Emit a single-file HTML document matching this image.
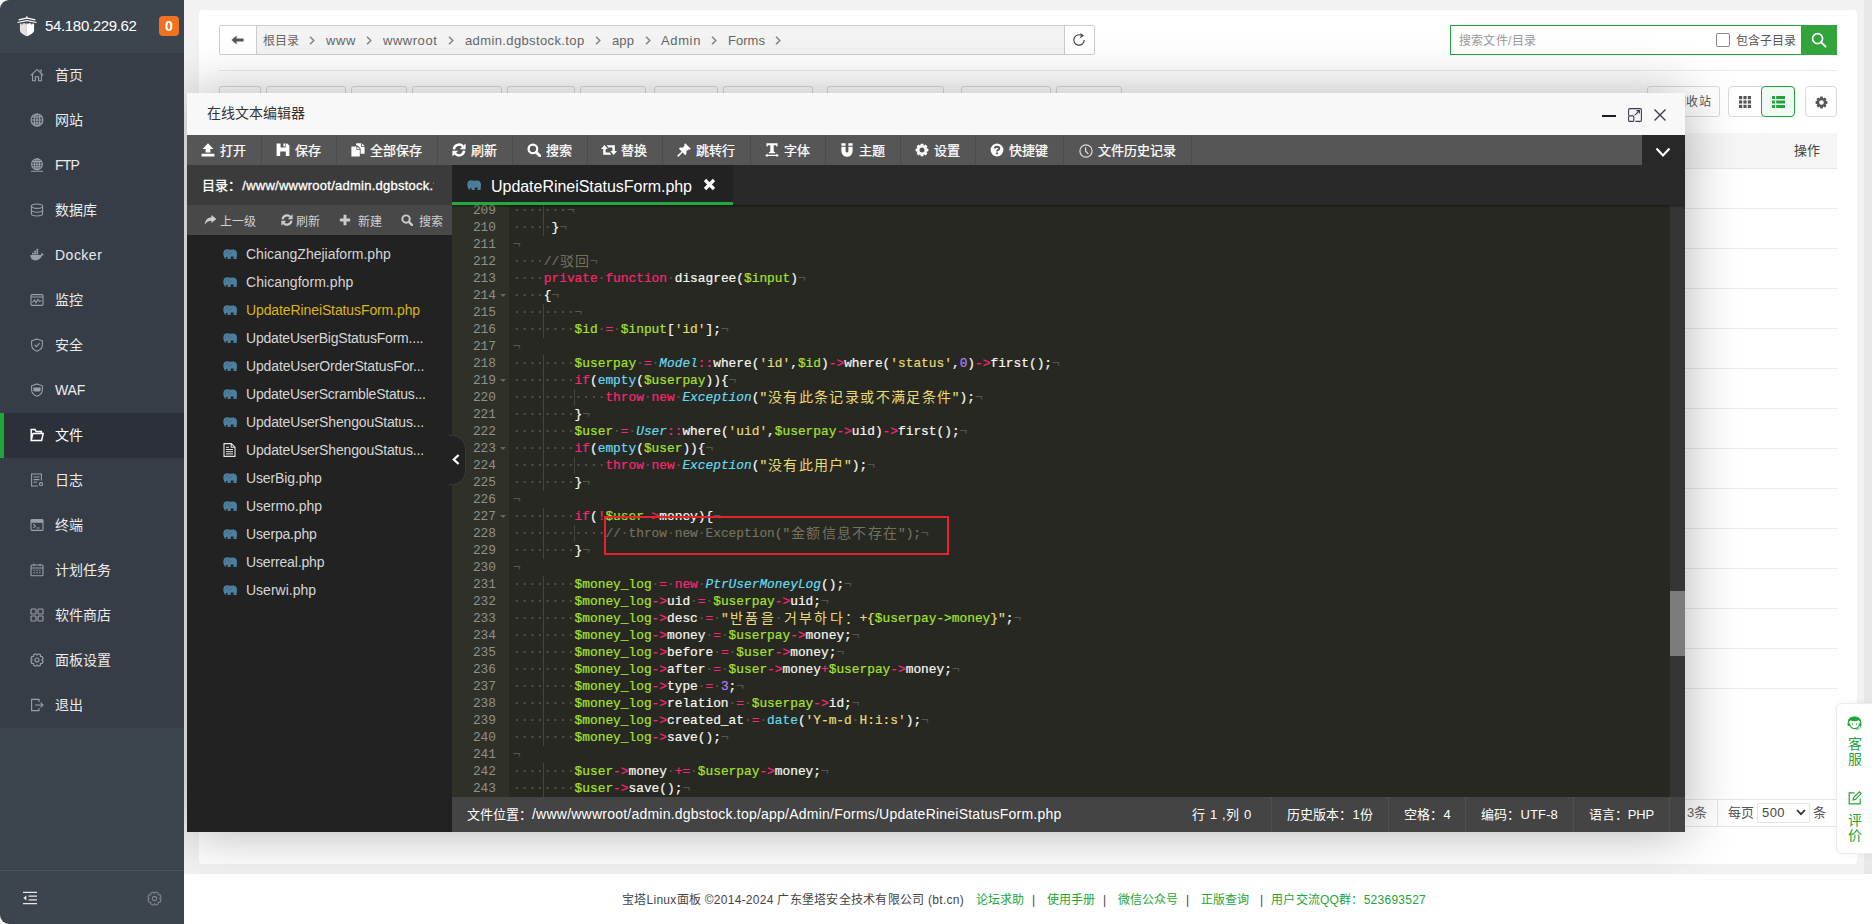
<!DOCTYPE html>
<html lang="zh-CN"><head><meta charset="utf-8"><title>BT</title><style>
*{box-sizing:border-box;margin:0;padding:0}
html,body{width:1872px;height:924px;overflow:hidden}
body{background:#f2f2f2;font-family:"Liberation Sans",sans-serif;font-size:12px;color:#666;position:relative}
.abs{position:absolute}
svg{display:block}
/* sidebar */
#cornerbg{position:absolute;left:0;top:0;width:12px;height:924px;background:#fff}
#side{position:absolute;left:0;top:0;width:184px;height:924px;background:#3c444d;border-radius:9px 0 0 9px;overflow:hidden}
#side .menu{position:absolute;left:0;top:53px;width:184px;height:675px;background:#363d47}
#side .it{position:absolute;left:0;width:184px;height:45px;color:#ebebeb;font-size:14px;line-height:45px}
#side .it span{position:absolute;left:55px;top:0;white-space:nowrap}
#side .it svg{position:absolute;left:29px;top:14px}
#side .it.on{background:#2c3038;color:#fff}
#side .it.on:before{content:"";position:absolute;left:0;top:0;width:4px;height:45px;background:#20a53a}
#ip{position:absolute;left:45px;top:16px;color:#fff;font-size:15px;line-height:20px;letter-spacing:-0.33px;white-space:nowrap}
#clip{position:absolute;left:184px;top:0;width:1688px;height:874px;overflow:hidden}
#clip>#shift{position:absolute;left:-184px;top:0;width:1872px;height:924px}
#badge{position:absolute;left:159px;top:16px;width:20px;height:20px;border-radius:4px;background:#f0721e;color:#fff;font-weight:bold;font-size:14px;line-height:20px;text-align:center}
#sline{position:absolute;left:0;top:870px;width:184px;height:1px;background:#48505a}
/* main */
#card{position:absolute;left:199px;top:10px;width:1658px;height:854px;background:#fff;border-radius:4px}
#rstrip{position:absolute;left:1864px;top:0;width:8px;height:874px;background:#e8e8e8}
#footer{position:absolute;left:184px;top:874px;width:1688px;height:50px;background:#fff}

#modal{position:absolute;left:187px;top:93px;width:1498px;height:739px;background:#222;box-shadow:1px 1px 50px rgba(0,0,0,.3)}
#mtitle{position:absolute;left:0;top:0;width:1498px;height:42px;background:#f8f8f8;color:#333;font-size:14px;line-height:40px;padding-left:20px}
#mtool{position:absolute;left:0;top:42px;width:1498px;height:30px;background:#282828}
#mtool .tb{position:absolute;top:0;height:30px;background:#565656;border-right:1px solid #4b4b4b;color:#fff;font-size:13px;line-height:30px;white-space:nowrap}
#mtool .tb span{position:absolute;top:1px;-webkit-text-stroke:0.25px #fff}
#mtool .tb svg{position:absolute}
#mtool .fill{position:absolute;top:0;height:30px;background:#565656}
#lpath{position:absolute;left:0;top:72px;width:265px;height:40px;background:#3b3b3b;color:#fff;font-size:13px;line-height:40px;white-space:nowrap;overflow:hidden}
#lsub{position:absolute;left:0;top:112px;width:265px;height:30px;background:#484848;color:#d0d0d0;font-size:12px;line-height:30px}
#lsub span{position:absolute;top:1.5px;white-space:nowrap}
#llist{position:absolute;left:0;top:142px;width:265px;height:597px;background:#222}
#llist .f{position:absolute;left:59px;height:28px;line-height:28px;font-size:14px;color:#d6d6d6;white-space:nowrap;letter-spacing:0.1px}
#llist .f.on{color:#d9b416}
#tabs{position:absolute;left:265px;top:72px;width:1233px;height:40px;background:#292929}
#tab1{position:absolute;left:0;top:0;width:281px;height:40px;background:#222;border-bottom:3px solid #23a93c;color:#fff;font-size:15px;line-height:40px;white-space:nowrap}
#ed{position:absolute;left:265px;top:112px;width:1233px;height:592px;background:#272822;overflow:hidden}
#gut{position:absolute;left:0;top:0;width:57px;height:592px;background:#2f3129}
#edsh{position:absolute;left:0;top:0;width:1233px;height:3px;background:linear-gradient(rgba(0,0,0,.35),rgba(0,0,0,0))}
#sbar{position:absolute;left:1218px;top:0;width:15px;height:592px;background:#353535}
#sthumb{position:absolute;left:0;top:386px;width:15px;height:65px;background:#7c7c7c}
.ln{position:absolute;left:0;width:57px;height:17px;font:12.83px/17px "Liberation Mono",monospace;color:#8f908a;text-align:right;padding-right:13px}
.fold{position:absolute;left:47.5px;width:0;height:0;border-left:3px solid transparent;border-right:3px solid transparent;border-top:3.5px solid #65665f}
.cl{position:absolute;left:61px;height:17px;font:12.83px/17px "Liberation Mono",monospace;color:#f8f8f2;white-space:pre;letter-spacing:0;-webkit-text-stroke:0.2px currentColor}
.cl span{display:inline-block;height:17px;vertical-align:top}
.k{color:#f92672}.v{color:#a6e22e}.s{color:#e6db74}.n{color:#ae81ff}.f{color:#66d9ef}.c{color:#66d9ef;font-style:italic}.cm{color:#75715e}
.i{color:#56564e}
.g{background:linear-gradient(#44453c,#44453c) no-repeat right top/1px 17px}
.w{width:15.394px;text-align:center;font-family:"Liberation Sans",sans-serif;font-size:14px;overflow:visible;-webkit-text-stroke:0}
#redbox{position:absolute;left:152px;top:311px;width:345px;height:39px;border:2px solid #e8222c}
#stat{position:absolute;left:265px;top:704px;width:1233px;height:35px;background:#444;color:#fff;font-size:13px;line-height:35px}
#stat span{position:absolute;top:0;white-space:nowrap}
.t{position:absolute;white-space:pre;display:block}
#lsub svg,#mtool svg{position:absolute}
#stat i{position:absolute;top:0;width:1px;height:35px;background:#4f4f4f}
#collapse{position:absolute;left:262px;top:342px;width:17px;height:50px;background:#222;border:1px solid #3a3a3a;border-left:none;border-radius:0 14px 14px 0}

.pt{position:absolute;white-space:pre;display:block}
.bx{position:absolute}
#pathbar{position:absolute;left:219px;top:25px;width:876px;height:30px;border:1px solid #ccc;border-radius:2px;background:#f3f3f3}
#pathbar .back{position:absolute;left:0;top:0;width:37px;height:28px;background:#fff;border-right:1px solid #ccc}
#pathbar .ref{position:absolute;right:0;top:0;width:30px;height:28px;background:#fff;border-left:1px solid #ccc}
#search{position:absolute;left:1450px;top:25px;width:387px;height:30px;border:1px solid #20a53a;background:#fff}
#search .btn{position:absolute;right:-1px;top:-1px;width:36px;height:30px;background:#31a53c}
#search .cb{position:absolute;left:265px;top:7px;width:14px;height:14px;border:1px solid #8a8a8a;border-radius:2px;background:#fff}
#hline{position:absolute;left:219px;top:70px;width:1618px;height:1px;background:#eaeaea}
.fb{position:absolute;top:86px;height:31px;border:1px solid #d9d9d9;border-radius:3px;background:#fff}
.fsep{position:absolute;top:94px;width:1px;height:16px;background:#ddd}
#thead{position:absolute;left:219px;top:133px;width:1618px;height:36px;background:#f6f6f6;border-bottom:1px solid #e6e6e6}
.rl{position:absolute;left:219px;width:1618px;height:1px;background:#ebebeb}
#pg{position:absolute;left:219px;top:799px;width:1618px;height:28px;border-top:1px solid #e6e6e6;border-bottom:1px solid #e6e6e6}
#float{position:absolute;left:1836px;top:703px;width:40px;height:151px;background:#fff;border:1px solid #ececec;border-radius:6px;box-shadow:0 0 6px rgba(0,0,0,.06)}
.fl{position:absolute;color:#20a53a;font-size:14px;line-height:15px;width:14px;text-align:center}
#footer .g{color:#20a53a}
</style></head><body><div id="cornerbg"></div><div id="side">
<svg width="20" height="22" viewBox="0 0 20 22" style="position:absolute;left:17px;top:15px"><path fill="#fff" d="M9.9 .6 L10.7 2.5 L18.5 4.3 L18.2 5.5 L9.9 3.7 L1.8 5.5 L1.5 4.3 L9.1 2.5 Z"/><path fill="#fff" d="M9.9 4.9 L19.7 6.9 L19.3 8.1 L9.9 6.2 L.7 8.1 L.3 6.9 Z"/><path fill="#e2e2e2" d="M2.9 8.8 L4.2 8.6 L4.9 10 L5.7 8.4 L8 8 L8.7 9.4 L9.9 7.8 V21.3 C6 19.7 2.9 17.8 2.9 15 Z"/><path fill="#fff" d="M9.9 7.8 L11.1 9.4 L11.8 8 L14.1 8.4 L14.9 10 L15.6 8.6 L17.1 8.8 V15 C17.1 17.8 14 19.7 9.9 21.3 Z"/></svg><div id="ip">54.180.229.62</div><div id="badge">0</div>
<div class="menu">
<div class="it" style="top:0px"><svg width="14" height="14" viewBox="0 0 14 14" style="left:30px;top:14.5px"><path fill="none" stroke="#9aa0a7" stroke-width="1.1" d="M.8 7.4 L7 1.4 L13.2 7.4 M2.6 6 V12.8 H5.4 V8.8 H8.6 V12.8 H11.4 V6 M9.6 2.2 H11.2 V4.2"/></svg><span>首页</span></div>
<div class="it" style="top:45px"><svg width="14" height="14" viewBox="0 0 14 14" style="left:30px;top:14.5px"><circle cx="7" cy="7" r="6" fill="none" stroke="#9aa0a7" stroke-width="1.1"/><ellipse cx="7" cy="7" rx="2.8" ry="6" fill="none" stroke="#9aa0a7" stroke-width="1.1"/><path fill="none" stroke="#9aa0a7" stroke-width="1.1" d="M7 1 V13 M1 7 H13 M1.8 4 H12.2 M1.8 10 H12.2"/></svg><span>网站</span></div>
<div class="it" style="top:90px"><svg width="14" height="14" viewBox="0 0 14 14" style="left:30px;top:14.5px"><circle cx="7" cy="6.2" r="5.4" fill="none" stroke="#9aa0a7" stroke-width="1.1"/><ellipse cx="7" cy="6.2" rx="2.5" ry="5.4" fill="none" stroke="#9aa0a7" stroke-width="1.1"/><path fill="none" stroke="#9aa0a7" stroke-width="1.1" d="M7 .8 V11.6 M1.6 6.2 H12.4 M2.4 3.6 H11.6 M2.4 8.8 H11.6 M1 13.2 H13"/></svg><span style="letter-spacing:-0.818px">FTP</span></div>
<div class="it" style="top:135px"><svg width="14" height="14" viewBox="0 0 14 14" style="left:30px;top:14.5px"><ellipse cx="7" cy="3.2" rx="5.6" ry="2.2" fill="none" stroke="#9aa0a7" stroke-width="1.1"/><path fill="none" stroke="#9aa0a7" stroke-width="1.1" d="M1.4 3.2 V10.8 C1.4 12 3.8 13 7 13 C10.2 13 12.6 12 12.6 10.8 V3.2 M1.4 7 C1.4 8.2 3.8 9.2 7 9.2 C10.2 9.2 12.6 8.2 12.6 7"/></svg><span>数据库</span></div>
<div class="it" style="top:180px"><svg width="14" height="14" viewBox="0 0 14 14" style="left:30px;top:14.5px"><path fill="#9aa0a7" d="M.4 7 H11 C11 5.8 11.4 5.2 12 4.8 C12.4 5.4 12.6 6 12.6 6.4 C13.2 6.2 13.8 6.4 14 6.6 C13.6 7.4 12.8 7.6 12 7.6 C11 10.6 8.6 12.4 5.4 12.4 C2.4 12.4 .4 10.4 .4 7 Z M2 4.8 H3.8 V6.4 H2 Z M4.2 4.8 H6 V6.4 H4.2 Z M6.4 4.8 H8.2 V6.4 H6.4 Z M4.2 2.8 H6 V4.4 H4.2 Z M6.4 2.8 H8.2 V4.4 H6.4 Z M6.4 .8 H8.2 V2.4 H6.4 Z"/></svg><span style="letter-spacing:0.49px">Docker</span></div>
<div class="it" style="top:225px"><svg width="14" height="14" viewBox="0 0 14 14" style="left:30px;top:14.5px"><rect x="1" y="1.6" width="12" height="10.8" rx="1" fill="none" stroke="#9aa0a7" stroke-width="1.1"/><path fill="none" stroke="#9aa0a7" stroke-width="1.1" d="M1 4 H13 M2.4 9.4 L4.6 7 L6 9.8 L8 6.4 L9.6 8.6 L11.6 7.4"/></svg><span>监控</span></div>
<div class="it" style="top:270px"><svg width="14" height="14" viewBox="0 0 14 14" style="left:30px;top:14.5px"><path fill="none" stroke="#9aa0a7" stroke-width="1.1" d="M7 .9 L12.4 2.8 V6.8 C12.4 10 10 12.2 7 13.2 C4 12.2 1.6 10 1.6 6.8 V2.8 Z M4.6 6.8 L6.4 8.6 L9.6 5.2"/></svg><span>安全</span></div>
<div class="it" style="top:315px"><svg width="14" height="14" viewBox="0 0 14 14" style="left:30px;top:14.5px"><path fill="none" stroke="#9aa0a7" stroke-width="1.1" d="M7 .9 L12.4 2.8 V6.8 C12.4 10 10 12.2 7 13.2 C4 12.2 1.6 10 1.6 6.8 V2.8 Z"/><path fill="#9aa0a7" d="M3.4 4.6 H10.6 V7.4 C10.6 8 9.8 8.6 7 8.6 C4.2 8.6 3.4 8 3.4 7.4 Z"/></svg><span style="letter-spacing:-0.198px">WAF</span></div>
<div class="it on" style="top:360px"><svg width="14" height="14" viewBox="0 0 14 14" style="left:30px;top:14.5px"><path fill="none" stroke="#fff" stroke-width="1.5" d="M1.2 12.4 V1.6 H5 L6.2 3.6 H11.4 V5.6 M1.2 12.4 L3 5.6 H13.2 L11.6 12.4 Z"/></svg><span>文件</span></div>
<div class="it" style="top:405px"><svg width="14" height="14" viewBox="0 0 14 14" style="left:30px;top:14.5px"><path fill="none" stroke="#9aa0a7" stroke-width="1.1" d="M11.4 7.6 V1 H1.6 V13 H8 M3.6 4 H9.4 M3.6 6.6 H9.4 M3.6 9.2 H7"/><circle cx="11" cy="11.2" r="1.6" fill="none" stroke="#9aa0a7" stroke-width="1.1"/></svg><span>日志</span></div>
<div class="it" style="top:450px"><svg width="14" height="14" viewBox="0 0 14 14" style="left:30px;top:14.5px"><rect x="1" y="1.6" width="12" height="10.8" rx="1" fill="none" stroke="#9aa0a7" stroke-width="1.1"/><path fill="none" stroke="#9aa0a7" stroke-width="1.1" d="M1 4.2 H13 M3.4 6.2 L5.4 8 L3.4 9.8 M6.6 10 H9.6"/><path fill="#9aa0a7" d="M1 1.6 H13 V4.2 H1 Z"/></svg><span>终端</span></div>
<div class="it" style="top:495px"><svg width="14" height="14" viewBox="0 0 14 14" style="left:30px;top:14.5px"><rect x="1" y="2" width="12" height="10.8" rx="1" fill="none" stroke="#9aa0a7" stroke-width="1.1"/><path fill="none" stroke="#9aa0a7" stroke-width="1.1" d="M1 5 H13 M4 .8 V3 M10 .8 V3 M3.4 7.2 H5 M6.2 7.2 H7.8 M9 7.2 H10.6 M3.4 9.8 H5 M6.2 9.8 H7.8 M9 9.8 H10.6"/></svg><span>计划任务</span></div>
<div class="it" style="top:540px"><svg width="14" height="14" viewBox="0 0 14 14" style="left:30px;top:14.5px"><rect x="1" y="1" width="5" height="5" rx=".8" fill="none" stroke="#9aa0a7" stroke-width="1.1"/><rect x="8" y="1" width="5" height="5" rx=".8" fill="none" stroke="#9aa0a7" stroke-width="1.1"/><rect x="1" y="8" width="5" height="5" rx=".8" fill="none" stroke="#9aa0a7" stroke-width="1.1"/><rect x="8" y="8" width="5" height="5" rx=".8" fill="none" stroke="#9aa0a7" stroke-width="1.1"/></svg><span>软件商店</span></div>
<div class="it" style="top:585px"><svg width="14" height="14" viewBox="0 0 14 14" style="left:30px;top:14.5px"><path fill="none" stroke="#9aa0a7" stroke-width="1.1" stroke-linejoin="round" d="M13.18 8.21 L12.23 10.52 L10.75 10.31 L10.31 10.75 L10.52 12.23 L8.21 13.18 L7.31 11.99 L6.69 11.99 L5.79 13.18 L3.48 12.23 L3.69 10.75 L3.25 10.31 L1.77 10.52 L0.82 8.21 L2.01 7.31 L2.01 6.69 L0.82 5.79 L1.77 3.48 L3.25 3.69 L3.69 3.25 L3.48 1.77 L5.79 0.82 L6.69 2.01 L7.31 2.01 L8.21 0.82 L10.52 1.77 L10.31 3.25 L10.75 3.69 L12.23 3.48 L13.18 5.79 L11.99 6.69 L11.99 7.31 Z"/><circle cx="7" cy="7" r="2" fill="none" stroke="#9aa0a7" stroke-width="1.1"/></svg><span>面板设置</span></div>
<div class="it" style="top:630px"><svg width="14" height="14" viewBox="0 0 14 14" style="left:30px;top:14.5px"><path fill="none" stroke="#9aa0a7" stroke-width="1.1" d="M9 4 V1.4 H1.6 V12.6 H9 V10 M5.2 7 H13 M10.6 4.6 L13 7 L10.6 9.4"/></svg><span>退出</span></div>
</div><div id="sline"></div>
<svg width="14" height="14" viewBox="0 0 15 14" style="position:absolute;left:23px;top:891px"><path d="M0 1 H15 M6 5 H15 M6 9 H15 M0 13 H15" stroke="#e8e8e8" stroke-width="1.4"/><path fill="#e8e8e8" d="M3.6 4.4 V9.6 L.4 7 Z"/></svg>
<svg width="15" height="15" viewBox="0 0 14 14" style="position:absolute;left:146.5px;top:890.5px"><path fill="none" stroke="#7d848c" stroke-width="1" stroke-linejoin="round" d="M13.18 8.21 L12.23 10.52 L10.75 10.31 L10.31 10.75 L10.52 12.23 L8.21 13.18 L7.31 11.99 L6.69 11.99 L5.79 13.18 L3.48 12.23 L3.69 10.75 L3.25 10.31 L1.77 10.52 L0.82 8.21 L2.01 7.31 L2.01 6.69 L0.82 5.79 L1.77 3.48 L3.25 3.69 L3.69 3.25 L3.48 1.77 L5.79 0.82 L6.69 2.01 L7.31 2.01 L8.21 0.82 L10.52 1.77 L10.31 3.25 L10.75 3.69 L12.23 3.48 L13.18 5.79 L11.99 6.69 L11.99 7.31 Z"/><circle cx="7" cy="7" r="2" fill="none" stroke="#7d848c" stroke-width="1"/></svg>
</div><div id="footer"></div><div id="clip"><div id="shift"><div id="card"></div><div id="rstrip"></div><div id="pathbar"><div class="back"><svg width="13" height="10" viewBox="0 0 13 10" style="position:absolute;left:11px;top:9px"><path fill="#555" d="M.4 5 L5.6 .4 V3.4 H12.6 V6.6 H5.6 V9.6 Z"/></svg></div><div class="ref"><svg width="14" height="14" viewBox="0 0 14 14" style="position:absolute;left:7px;top:7px"><path d="M12.2 7 A5.2 5.2 0 1 1 9.8 2.6" fill="none" stroke="#444" stroke-width="1.2"/><path d="M8.4 .6 L11 2.8 L8.2 4.6" fill="none" stroke="#444" stroke-width="1.2"/></svg></div></div><span class="pt" style="left:263px;top:30.5px;height:20px;line-height:20px;font-size:12px;color:#666;letter-spacing:0.167px;">根目录</span><span class="pt" style="left:326px;top:30.5px;height:20px;line-height:20px;font-size:13px;color:#666;letter-spacing:0.609px;">www</span><span class="pt" style="left:383px;top:30.5px;height:20px;line-height:20px;font-size:13px;color:#666;letter-spacing:0.532px;">wwwroot</span><span class="pt" style="left:465px;top:30.5px;height:20px;line-height:20px;font-size:13px;color:#666;letter-spacing:0.376px;">admin.dgbstock.top</span><span class="pt" style="left:612px;top:30.5px;height:20px;line-height:20px;font-size:13px;color:#666;letter-spacing:0.099px;">app</span><span class="pt" style="left:661px;top:30.5px;height:20px;line-height:20px;font-size:13px;color:#666;letter-spacing:0.628px;">Admin</span><span class="pt" style="left:728px;top:30.5px;height:20px;line-height:20px;font-size:13px;color:#666;letter-spacing:0.031px;">Forms</span><svg width="6" height="9" viewBox="0 0 6 9" style="position:absolute;left:309px;top:35.5px"><path d="M1 .8 L4.8 4.5 L1 8.2" fill="none" stroke="#858585" stroke-width="1.5"/></svg><svg width="6" height="9" viewBox="0 0 6 9" style="position:absolute;left:365.5px;top:35.5px"><path d="M1 .8 L4.8 4.5 L1 8.2" fill="none" stroke="#858585" stroke-width="1.5"/></svg><svg width="6" height="9" viewBox="0 0 6 9" style="position:absolute;left:448px;top:35.5px"><path d="M1 .8 L4.8 4.5 L1 8.2" fill="none" stroke="#858585" stroke-width="1.5"/></svg><svg width="6" height="9" viewBox="0 0 6 9" style="position:absolute;left:594.5px;top:35.5px"><path d="M1 .8 L4.8 4.5 L1 8.2" fill="none" stroke="#858585" stroke-width="1.5"/></svg><svg width="6" height="9" viewBox="0 0 6 9" style="position:absolute;left:644.5px;top:35.5px"><path d="M1 .8 L4.8 4.5 L1 8.2" fill="none" stroke="#858585" stroke-width="1.5"/></svg><svg width="6" height="9" viewBox="0 0 6 9" style="position:absolute;left:710.5px;top:35.5px"><path d="M1 .8 L4.8 4.5 L1 8.2" fill="none" stroke="#858585" stroke-width="1.5"/></svg><svg width="6" height="9" viewBox="0 0 6 9" style="position:absolute;left:774.5px;top:35.5px"><path d="M1 .8 L4.8 4.5 L1 8.2" fill="none" stroke="#858585" stroke-width="1.5"/></svg><div id="search"><div class="cb"></div><div class="btn"><svg width="16" height="16" viewBox="0 0 16 16" style="position:absolute;left:10px;top:7px"><circle cx="6.6" cy="6.6" r="5" fill="none" stroke="#fff" stroke-width="1.7"/><path d="M10.3 10.3 L14.6 14.6" stroke="#fff" stroke-width="1.9" stroke-linecap="round"/></svg></div></div><span class="pt" style="left:1459px;top:31px;height:20px;line-height:20px;font-size:12px;color:#999;letter-spacing:0.237px;">搜索文件/目录</span><span class="pt" style="left:1736px;top:31px;height:20px;line-height:20px;font-size:12px;color:#555;letter-spacing:0px;">包含子目录</span><div id="hline"></div><div class="fb" style="left:219px;width:42px"></div><div class="fb" style="left:266px;width:80px"></div><div class="fb" style="left:351px;width:56px"></div><div class="fb" style="left:412px;width:90px"></div><div class="fb" style="left:507px;width:68px"></div><div class="fb" style="left:580px;width:66px"></div><div class="fb" style="left:654px;width:64px"></div><div class="fb" style="left:723px;width:90px"></div><div class="fb" style="left:827px;width:117px"></div><div class="fb" style="left:961px;width:90px"></div><div class="fb" style="left:1056px;width:66px"></div><div class="fb" style="left:1647px;width:73px"></div><div class="fsep" style="left:819px"></div><div class="fsep" style="left:952px"></div><span class="pt" style="left:1674px;top:91.5px;height:20px;line-height:20px;font-size:12px;color:#555;letter-spacing:0.333px;">回收站</span><div class="fb" style="left:1728px;width:67px;border-radius:4px"></div><div class="fb" style="left:1761px;width:34px;border-radius:4px;border-color:#20a53a;background:#f1f9f3"></div><svg width="12" height="12" viewBox="0 0 12 12" style="position:absolute;left:1738.5px;top:96px"><rect x="0" y="0" width="3.2" height="3.2" fill="#555"/><rect x="0" y="4.4" width="3.2" height="3.2" fill="#555"/><rect x="0" y="8.8" width="3.2" height="3.2" fill="#555"/><rect x="4.4" y="0" width="3.2" height="3.2" fill="#555"/><rect x="4.4" y="4.4" width="3.2" height="3.2" fill="#555"/><rect x="4.4" y="8.8" width="3.2" height="3.2" fill="#555"/><rect x="8.8" y="0" width="3.2" height="3.2" fill="#555"/><rect x="8.8" y="4.4" width="3.2" height="3.2" fill="#555"/><rect x="8.8" y="8.8" width="3.2" height="3.2" fill="#555"/></svg><svg width="13" height="12" viewBox="0 0 13 12" style="position:absolute;left:1771.5px;top:96px"><rect x="0" y="0" width="3" height="3" fill="#20a53a"/><rect x="4.2" y="0" width="8.8" height="3" fill="#20a53a"/><rect x="0" y="4.5" width="3" height="3" fill="#20a53a"/><rect x="4.2" y="4.5" width="8.8" height="3" fill="#20a53a"/><rect x="0" y="9" width="3" height="3" fill="#20a53a"/><rect x="4.2" y="9" width="8.8" height="3" fill="#20a53a"/></svg><div class="fb" style="left:1805px;width:32px;border-radius:4px"></div><svg width="13" height="13" viewBox="0 0 14 14" style="position:absolute;left:1814.5px;top:96px"><path fill="#555" fill-rule="evenodd" d="M13.37 5.71 L13.37 8.29 L11.35 8.79 L11.34 8.81 L12.42 10.59 L10.59 12.42 L8.81 11.34 L8.79 11.35 L8.29 13.37 L5.71 13.37 L5.21 11.35 L5.19 11.34 L3.41 12.42 L1.58 10.59 L2.66 8.81 L2.65 8.79 L0.63 8.29 L0.63 5.71 L2.65 5.21 L2.66 5.19 L1.58 3.41 L3.41 1.58 L5.19 2.66 L5.21 2.65 L5.71 0.63 L8.29 0.63 L8.79 2.65 L8.81 2.66 L10.59 1.58 L12.42 3.41 L11.34 5.19 L11.35 5.21 Z M7 4.5 A2.5 2.5 0 1 0 7 9.5 A2.5 2.5 0 1 0 7 4.5 Z"/></svg><div id="thead"></div><span class="pt" style="left:1794px;top:141px;height:20px;line-height:20px;font-size:13px;color:#444;letter-spacing:0px;">操作</span><div class="rl" style="top:208px"></div><div class="rl" style="top:248px"></div><div class="rl" style="top:288px"></div><div class="rl" style="top:328px"></div><div class="rl" style="top:368px"></div><div class="rl" style="top:408px"></div><div class="rl" style="top:448px"></div><div class="rl" style="top:488px"></div><div class="rl" style="top:528px"></div><div class="rl" style="top:568px"></div><div class="rl" style="top:608px"></div><div class="rl" style="top:648px"></div><div class="rl" style="top:688px"></div><div id="pg"></div><div class="bx" style="left:1717px;top:800px;width:1px;height:26px;background:#e6e6e6"></div><span class="pt" style="left:1687px;top:803px;height:20px;line-height:20px;font-size:13px;color:#666;letter-spacing:-0.117px;">3条</span><span class="pt" style="left:1728px;top:803px;height:20px;line-height:20px;font-size:13px;color:#555;letter-spacing:0px;">每页</span><div class="bx" style="left:1757px;top:803px;width:53px;height:20px;border:1px solid #e4e4e4;border-radius:2px;background:#fff"></div><span class="pt" style="left:1762px;top:803px;height:20px;line-height:20px;font-size:13px;color:#444;letter-spacing:0.432px;">500</span><svg width="10" height="7" viewBox="0 0 10 7" style="position:absolute;left:1796px;top:809px"><path d="M1 1 L5 5.2 L9 1" fill="none" stroke="#333" stroke-width="1.8"/></svg><span class="pt" style="left:1813px;top:803px;height:20px;line-height:20px;font-size:13px;color:#555;letter-spacing:0px;">条</span><div id="modal">
<div id="mtitle">在线文本编辑器</div><div style="position:absolute;left:1415px;top:22px;width:14px;height:2px;background:#1c1a2e"></div><svg width="14" height="14" viewBox="0 0 14 14" style="position:absolute;left:1441px;top:15px"><path d="M.6 7.4 V1.8 Q.6 .6 1.8 .6 H12.2 Q13.4 .6 13.4 1.8 V12.2 Q13.4 13.4 12.2 13.4 H7.4" fill="none" stroke="#3d3b50" stroke-width="1.1"/><rect x=".6" y="7.9" width="5.2" height="5.5" rx="1" fill="none" stroke="#3d3b50" stroke-width="1.1"/><path d="M6.6 7.4 L11.2 2.8 M8.4 2.6 H11.4 V5.6" fill="none" stroke="#3d3b50" stroke-width="1.1"/></svg><svg width="12" height="12" viewBox="0 0 12 12" style="position:absolute;left:1467px;top:16px"><path d="M.5 .5 L11.5 11.5 M11.5 .5 L.5 11.5" stroke="#3d3b50" stroke-width="1.4"/></svg>
<div id="mtool"><div class="tb" style="left:0px;width:75px"><svg width="14" height="14" viewBox="0 0 14 14" style="left:13.5px;top:7.5px"><path fill="#fff" d="M7 .2 L12.4 6 H9.4 V9.4 H4.6 V6 H1.6 Z M.6 10.8 H13.4 V13.6 H.6 Z"/></svg><span style="left:33px">打开</span></div><div class="tb" style="left:75px;width:75px"><svg width="14" height="14" viewBox="0 0 14 14" style="left:13.5px;top:7.5px"><path fill="#fff" fill-rule="evenodd" d="M.6 .4 H11.2 L13.4 2.6 V13 H.6 Z M4.6 .4 V4.4 H9.6 V.4 Z M4.2 8.6 V13 H9.8 V8.6 Z"/><path fill="#fff" d="M7.4 .4 H9 V3.6 H7.4 Z"/></svg><span style="left:33px">保存</span></div><div class="tb" style="left:150px;width:101px"><svg width="14" height="14" viewBox="0 0 14 14" style="left:13.5px;top:7.5px"><path fill="#fff" d="M.4 3.4 H5.4 V6.8 H8.8 V13.6 H.4 Z"/><path fill="#fff" d="M6.2 3.4 L8.8 6 H6.2 Z"/><path fill="#fff" d="M5.2 .2 H10 V3.8 H13.6 V10.8 H9.6 V5.4 L6.8 2.6 H5.2 Z M10.8 .2 L13.6 3 H10.8 Z"/></svg><span style="left:33px">全部保存</span></div><div class="tb" style="left:251px;width:75px"><svg width="14" height="14" viewBox="0 0 14 14" style="left:13.5px;top:7.5px"><path fill="none" stroke="#fff" stroke-width="2.5" d="M1.9 6.3 A5.2 5.2 0 0 1 10.9 3.3 M12.1 7.7 A5.2 5.2 0 0 1 3.1 10.7"/><path fill="#fff" d="M13.6 .4 V6.2 H7.8 Z M.4 13.6 V7.8 H6.2 Z"/></svg><span style="left:33px">刷新</span></div><div class="tb" style="left:326px;width:75px"><svg width="14" height="14" viewBox="0 0 14 14" style="left:13.5px;top:7.5px"><circle cx="5.9" cy="5.9" r="4.3" fill="none" stroke="#fff" stroke-width="2.3"/><path d="M9.2 9.2 L12.8 12.8" stroke="#fff" stroke-width="2.8" stroke-linecap="round"/></svg><span style="left:33px">搜索</span></div><div class="tb" style="left:401px;width:75px"><svg width="16" height="14" viewBox="0 0 16 14" style="left:13px;top:7.5px"><path fill="#fff" d="M3.4 2 L6.8 6 H4.6 V9.6 H8.6 L10.4 11.8 H2.2 V6 H0 Z"/><path fill="#fff" d="M12.6 12 L9.2 8 H11.4 V4.4 H7.4 L5.6 2.2 H13.8 V8 H16 Z"/></svg><span style="left:33px">替换</span></div><div class="tb" style="left:476px;width:88px"><svg width="14" height="14" viewBox="0 0 14 14" style="left:13.5px;top:7.5px"><path fill="#fff" d="M8.2 .2 L13.8 5.8 L12.6 6.8 L11.2 6.4 L9.2 8.4 C9.8 9.8 9.4 11.2 8.4 12.2 L5.6 9.4 L1.2 13.9 L.1 12.8 L4.6 8.4 L1.8 5.6 C2.8 4.6 4.2 4.2 5.6 4.8 L7.6 2.8 L7.2 1.4 Z"/></svg><span style="left:33px">跳转行</span></div><div class="tb" style="left:564px;width:75px"><svg width="14" height="14" viewBox="0 0 14 14" style="left:13.5px;top:7.5px"><path fill="#fff" d="M1.4 .2 H12.6 V3.6 H11.6 L10.8 2.2 H8.7 V8.6 L10.2 9.2 V10.2 H3.8 V9.2 L5.3 8.6 V2.2 H3.2 L2.4 3.6 H1.4 Z"/><path fill="#fff" d="M.2 12.4 L2.6 10.6 V11.8 H11.4 V10.6 L13.8 12.4 L11.4 14.2 V13 H2.6 V14.2 Z"/></svg><span style="left:33px">字体</span></div><div class="tb" style="left:639px;width:75px"><svg width="14" height="14" viewBox="0 0 14 14" style="left:13.5px;top:7.5px"><path fill="#fff" d="M1.4 .2 H5.6 V2.8 H1.4 Z M8.4 .2 H12.6 V2.8 H8.4 Z"/><path fill="#fff" d="M1.4 3.8 H5.6 V8 A1.4 1.4 0 0 0 8.4 8 V3.8 H12.6 V8.2 A5.6 5.6 0 0 1 1.4 8.2 Z"/></svg><span style="left:33px">主题</span></div><div class="tb" style="left:714px;width:75px"><svg width="14" height="14" viewBox="0 0 14 14" style="left:13.5px;top:7.5px"><path fill="#fff" fill-rule="evenodd" d="M13.37 5.71 L13.37 8.29 L11.35 8.79 L11.34 8.81 L12.42 10.59 L10.59 12.42 L8.81 11.34 L8.79 11.35 L8.29 13.37 L5.71 13.37 L5.21 11.35 L5.19 11.34 L3.41 12.42 L1.58 10.59 L2.66 8.81 L2.65 8.79 L0.63 8.29 L0.63 5.71 L2.65 5.21 L2.66 5.19 L1.58 3.41 L3.41 1.58 L5.19 2.66 L5.21 2.65 L5.71 0.63 L8.29 0.63 L8.79 2.65 L8.81 2.66 L10.59 1.58 L12.42 3.41 L11.34 5.19 L11.35 5.21 Z M7 4.5 A2.5 2.5 0 1 0 7 9.5 A2.5 2.5 0 1 0 7 4.5 Z"/></svg><span style="left:33px">设置</span></div><div class="tb" style="left:789px;width:88px"><svg width="14" height="14" viewBox="0 0 14 14" style="left:13.5px;top:7.5px"><circle cx="7" cy="7" r="6.4" fill="#fff"/><path fill="none" stroke="#565656" stroke-width="1.9" d="M4.7 5.4 C4.7 3.2 9.3 3.2 9.3 5.4 C9.3 6.8 7 6.9 7 8.6"/><rect x="6.05" y="9.5" width="1.9" height="1.8" fill="#565656"/></svg><span style="left:33px">快捷键</span></div><div class="tb" style="left:877px;width:128px"><svg width="14" height="14" viewBox="0 0 14 14" style="left:14.5px;top:8.5px"><circle cx="7" cy="7" r="6.1" fill="none" stroke="#dcdcdc" stroke-width="1.2"/><path d="M6.6 3.2 V7.2 L9.4 10" fill="none" stroke="#dcdcdc" stroke-width="1.2"/></svg><span style="left:34px">文件历史记录</span></div><div class="fill" style="left:1005px;width:450px"></div><svg width="16" height="11" viewBox="0 0 16 11" style="position:absolute;left:1468px;top:12px"><path d="M1.5 1.5 L8 8.5 L14.5 1.5" fill="none" stroke="#fff" stroke-width="2.2"/></svg></div>
<div id="lpath"><div style="position:absolute;left:0;top:0;width:247px;height:40px;overflow:hidden;-webkit-text-stroke:0.3px #fff"><span class="t" style="left:15px;top:1px;height:40px;line-height:40px;font-size:13px;">目录：</span><span class="t" style="left:55.3px;top:1px;height:40px;line-height:40px;font-size:13px;letter-spacing:0.242px;">/www/wwwroot/admin.dgbstock.</span><span class="t" style="left:246.8px;top:1px;height:40px;line-height:40px;font-size:13px;">top</span></div></div><div id="lsub"><svg width="13" height="12" viewBox="0 0 14 13" style="position:absolute;left:17px;top:9px"><path fill="#ccc" d="M8 1 L13.4 5.4 L8 9.8 V7.2 C4.8 7.2 2.4 8.4 .8 11.6 C1 7 3.8 3.8 8 3.6 Z"/></svg><span style="left:33px">上一级</span><svg width="12" height="12" viewBox="0 0 14 14" style="position:absolute;left:94px;top:9px"><path fill="none" stroke="#ccc" stroke-width="2.5" d="M1.9 6.3 A5.2 5.2 0 0 1 10.9 3.3 M12.1 7.7 A5.2 5.2 0 0 1 3.1 10.7"/><path fill="#ccc" d="M13.6 .4 V6.2 H7.8 Z M.4 13.6 V7.8 H6.2 Z"/></svg><span style="left:109px">刷新</span><svg width="12" height="12" viewBox="0 0 14 14" style="position:absolute;left:152px;top:9px"><path fill="#ccc" d="M5.3 1 H8.7 V5.3 H13 V8.7 H8.7 V13 H5.3 V8.7 H1 V5.3 H5.3 Z"/></svg><span style="left:171px">新建</span><svg width="12" height="12" viewBox="0 0 14 14" style="position:absolute;left:214px;top:9px"><circle cx="5.9" cy="5.9" r="4.3" fill="none" stroke="#ccc" stroke-width="2.3"/><path d="M9.2 9.2 L12.8 12.8" stroke="#ccc" stroke-width="2.8" stroke-linecap="round"/></svg><span style="left:232px">搜索</span></div><div id="llist"><svg width="14.3" height="10.5" viewBox="0 0 15 11" style="position:absolute;left:35.5px;top:13.5px"><path fill="#4c7e9d" d="M2.1 10 C1.2 9 .3 6.7 .3 4.6 C.3 2 2 .3 4.4 .3 C5.8 .3 6.4 .9 7.4 .9 L10.6 .6 C13 .6 14.7 2.3 14.7 4.9 L14.3 10.6 H11 V7.8 H8.1 V10.6 H4.9 V8.4 C4.3 8.4 3.7 8.2 3.3 7.8 L3.5 10 Z"/><path d="M5.2 1.2 C4.6 3 5 4.6 6.6 5.2 C8 5.5 9 4.4 9 3" fill="none" stroke="#3d6884" stroke-width=".6"/><circle cx="2.6" cy="4" r=".45" fill="#2a2a2a"/></svg><div class="f" style="top:5px;letter-spacing:-0.002px">ChicangZhejiaform.php</div><svg width="14.3" height="10.5" viewBox="0 0 15 11" style="position:absolute;left:35.5px;top:41.5px"><path fill="#4c7e9d" d="M2.1 10 C1.2 9 .3 6.7 .3 4.6 C.3 2 2 .3 4.4 .3 C5.8 .3 6.4 .9 7.4 .9 L10.6 .6 C13 .6 14.7 2.3 14.7 4.9 L14.3 10.6 H11 V7.8 H8.1 V10.6 H4.9 V8.4 C4.3 8.4 3.7 8.2 3.3 7.8 L3.5 10 Z"/><path d="M5.2 1.2 C4.6 3 5 4.6 6.6 5.2 C8 5.5 9 4.4 9 3" fill="none" stroke="#3d6884" stroke-width=".6"/><circle cx="2.6" cy="4" r=".45" fill="#2a2a2a"/></svg><div class="f" style="top:33px;letter-spacing:0.045px">Chicangform.php</div><svg width="14.3" height="10.5" viewBox="0 0 15 11" style="position:absolute;left:35.5px;top:69.5px"><path fill="#4c7e9d" d="M2.1 10 C1.2 9 .3 6.7 .3 4.6 C.3 2 2 .3 4.4 .3 C5.8 .3 6.4 .9 7.4 .9 L10.6 .6 C13 .6 14.7 2.3 14.7 4.9 L14.3 10.6 H11 V7.8 H8.1 V10.6 H4.9 V8.4 C4.3 8.4 3.7 8.2 3.3 7.8 L3.5 10 Z"/><path d="M5.2 1.2 C4.6 3 5 4.6 6.6 5.2 C8 5.5 9 4.4 9 3" fill="none" stroke="#3d6884" stroke-width=".6"/><circle cx="2.6" cy="4" r=".45" fill="#2a2a2a"/></svg><div class="f on" style="top:61px;letter-spacing:-0.106px">UpdateRineiStatusForm.php</div><svg width="14.3" height="10.5" viewBox="0 0 15 11" style="position:absolute;left:35.5px;top:97.5px"><path fill="#4c7e9d" d="M2.1 10 C1.2 9 .3 6.7 .3 4.6 C.3 2 2 .3 4.4 .3 C5.8 .3 6.4 .9 7.4 .9 L10.6 .6 C13 .6 14.7 2.3 14.7 4.9 L14.3 10.6 H11 V7.8 H8.1 V10.6 H4.9 V8.4 C4.3 8.4 3.7 8.2 3.3 7.8 L3.5 10 Z"/><path d="M5.2 1.2 C4.6 3 5 4.6 6.6 5.2 C8 5.5 9 4.4 9 3" fill="none" stroke="#3d6884" stroke-width=".6"/><circle cx="2.6" cy="4" r=".45" fill="#2a2a2a"/></svg><div class="f" style="top:89px;letter-spacing:-0.206px">UpdateUserBigStatusForm....</div><svg width="14.3" height="10.5" viewBox="0 0 15 11" style="position:absolute;left:35.5px;top:125.5px"><path fill="#4c7e9d" d="M2.1 10 C1.2 9 .3 6.7 .3 4.6 C.3 2 2 .3 4.4 .3 C5.8 .3 6.4 .9 7.4 .9 L10.6 .6 C13 .6 14.7 2.3 14.7 4.9 L14.3 10.6 H11 V7.8 H8.1 V10.6 H4.9 V8.4 C4.3 8.4 3.7 8.2 3.3 7.8 L3.5 10 Z"/><path d="M5.2 1.2 C4.6 3 5 4.6 6.6 5.2 C8 5.5 9 4.4 9 3" fill="none" stroke="#3d6884" stroke-width=".6"/><circle cx="2.6" cy="4" r=".45" fill="#2a2a2a"/></svg><div class="f" style="top:117px;letter-spacing:-0.14px">UpdateUserOrderStatusFor...</div><svg width="14.3" height="10.5" viewBox="0 0 15 11" style="position:absolute;left:35.5px;top:153.5px"><path fill="#4c7e9d" d="M2.1 10 C1.2 9 .3 6.7 .3 4.6 C.3 2 2 .3 4.4 .3 C5.8 .3 6.4 .9 7.4 .9 L10.6 .6 C13 .6 14.7 2.3 14.7 4.9 L14.3 10.6 H11 V7.8 H8.1 V10.6 H4.9 V8.4 C4.3 8.4 3.7 8.2 3.3 7.8 L3.5 10 Z"/><path d="M5.2 1.2 C4.6 3 5 4.6 6.6 5.2 C8 5.5 9 4.4 9 3" fill="none" stroke="#3d6884" stroke-width=".6"/><circle cx="2.6" cy="4" r=".45" fill="#2a2a2a"/></svg><div class="f" style="top:145px;letter-spacing:-0.204px">UpdateUserScrambleStatus...</div><svg width="14.3" height="10.5" viewBox="0 0 15 11" style="position:absolute;left:35.5px;top:181.5px"><path fill="#4c7e9d" d="M2.1 10 C1.2 9 .3 6.7 .3 4.6 C.3 2 2 .3 4.4 .3 C5.8 .3 6.4 .9 7.4 .9 L10.6 .6 C13 .6 14.7 2.3 14.7 4.9 L14.3 10.6 H11 V7.8 H8.1 V10.6 H4.9 V8.4 C4.3 8.4 3.7 8.2 3.3 7.8 L3.5 10 Z"/><path d="M5.2 1.2 C4.6 3 5 4.6 6.6 5.2 C8 5.5 9 4.4 9 3" fill="none" stroke="#3d6884" stroke-width=".6"/><circle cx="2.6" cy="4" r=".45" fill="#2a2a2a"/></svg><div class="f" style="top:173px;letter-spacing:-0.159px">UpdateUserShengouStatus...</div><svg width="13" height="14" viewBox="0 0 13 14" style="position:absolute;left:36px;top:208px"><path d="M1 .6 H8.3 L12 4.2 V13.4 H1 Z M8.2 .8 V4.3 H11.8" fill="none" stroke="#e6e6e6" stroke-width="1.1"/><path d="M3 6.5 H10 M3 8.7 H10 M3 10.9 H10 M3 4.3 H6" stroke="#e6e6e6" stroke-width="1"/></svg><div class="f" style="top:201px;letter-spacing:-0.159px">UpdateUserShengouStatus...</div><svg width="14.3" height="10.5" viewBox="0 0 15 11" style="position:absolute;left:35.5px;top:237.5px"><path fill="#4c7e9d" d="M2.1 10 C1.2 9 .3 6.7 .3 4.6 C.3 2 2 .3 4.4 .3 C5.8 .3 6.4 .9 7.4 .9 L10.6 .6 C13 .6 14.7 2.3 14.7 4.9 L14.3 10.6 H11 V7.8 H8.1 V10.6 H4.9 V8.4 C4.3 8.4 3.7 8.2 3.3 7.8 L3.5 10 Z"/><path d="M5.2 1.2 C4.6 3 5 4.6 6.6 5.2 C8 5.5 9 4.4 9 3" fill="none" stroke="#3d6884" stroke-width=".6"/><circle cx="2.6" cy="4" r=".45" fill="#2a2a2a"/></svg><div class="f" style="top:229px;letter-spacing:-0.122px">UserBig.php</div><svg width="14.3" height="10.5" viewBox="0 0 15 11" style="position:absolute;left:35.5px;top:265.5px"><path fill="#4c7e9d" d="M2.1 10 C1.2 9 .3 6.7 .3 4.6 C.3 2 2 .3 4.4 .3 C5.8 .3 6.4 .9 7.4 .9 L10.6 .6 C13 .6 14.7 2.3 14.7 4.9 L14.3 10.6 H11 V7.8 H8.1 V10.6 H4.9 V8.4 C4.3 8.4 3.7 8.2 3.3 7.8 L3.5 10 Z"/><path d="M5.2 1.2 C4.6 3 5 4.6 6.6 5.2 C8 5.5 9 4.4 9 3" fill="none" stroke="#3d6884" stroke-width=".6"/><circle cx="2.6" cy="4" r=".45" fill="#2a2a2a"/></svg><div class="f" style="top:257px;letter-spacing:-0.027px">Usermo.php</div><svg width="14.3" height="10.5" viewBox="0 0 15 11" style="position:absolute;left:35.5px;top:293.5px"><path fill="#4c7e9d" d="M2.1 10 C1.2 9 .3 6.7 .3 4.6 C.3 2 2 .3 4.4 .3 C5.8 .3 6.4 .9 7.4 .9 L10.6 .6 C13 .6 14.7 2.3 14.7 4.9 L14.3 10.6 H11 V7.8 H8.1 V10.6 H4.9 V8.4 C4.3 8.4 3.7 8.2 3.3 7.8 L3.5 10 Z"/><path d="M5.2 1.2 C4.6 3 5 4.6 6.6 5.2 C8 5.5 9 4.4 9 3" fill="none" stroke="#3d6884" stroke-width=".6"/><circle cx="2.6" cy="4" r=".45" fill="#2a2a2a"/></svg><div class="f" style="top:285px;letter-spacing:-0.169px">Userpa.php</div><svg width="14.3" height="10.5" viewBox="0 0 15 11" style="position:absolute;left:35.5px;top:321.5px"><path fill="#4c7e9d" d="M2.1 10 C1.2 9 .3 6.7 .3 4.6 C.3 2 2 .3 4.4 .3 C5.8 .3 6.4 .9 7.4 .9 L10.6 .6 C13 .6 14.7 2.3 14.7 4.9 L14.3 10.6 H11 V7.8 H8.1 V10.6 H4.9 V8.4 C4.3 8.4 3.7 8.2 3.3 7.8 L3.5 10 Z"/><path d="M5.2 1.2 C4.6 3 5 4.6 6.6 5.2 C8 5.5 9 4.4 9 3" fill="none" stroke="#3d6884" stroke-width=".6"/><circle cx="2.6" cy="4" r=".45" fill="#2a2a2a"/></svg><div class="f" style="top:313px;letter-spacing:-0.155px">Userreal.php</div><svg width="14.3" height="10.5" viewBox="0 0 15 11" style="position:absolute;left:35.5px;top:349.5px"><path fill="#4c7e9d" d="M2.1 10 C1.2 9 .3 6.7 .3 4.6 C.3 2 2 .3 4.4 .3 C5.8 .3 6.4 .9 7.4 .9 L10.6 .6 C13 .6 14.7 2.3 14.7 4.9 L14.3 10.6 H11 V7.8 H8.1 V10.6 H4.9 V8.4 C4.3 8.4 3.7 8.2 3.3 7.8 L3.5 10 Z"/><path d="M5.2 1.2 C4.6 3 5 4.6 6.6 5.2 C8 5.5 9 4.4 9 3" fill="none" stroke="#3d6884" stroke-width=".6"/><circle cx="2.6" cy="4" r=".45" fill="#2a2a2a"/></svg><div class="f" style="top:341px;letter-spacing:-0.003px">Userwi.php</div></div>
<div id="tabs"><div id="tab1"><svg width="14.3" height="10.5" viewBox="0 0 15 11" style="position:absolute;left:14.5px;top:14.5px"><path fill="#4c7e9d" d="M2.1 10 C1.2 9 .3 6.7 .3 4.6 C.3 2 2 .3 4.4 .3 C5.8 .3 6.4 .9 7.4 .9 L10.6 .6 C13 .6 14.7 2.3 14.7 4.9 L14.3 10.6 H11 V7.8 H8.1 V10.6 H4.9 V8.4 C4.3 8.4 3.7 8.2 3.3 7.8 L3.5 10 Z"/><path d="M5.2 1.2 C4.6 3 5 4.6 6.6 5.2 C8 5.5 9 4.4 9 3" fill="none" stroke="#3d6884" stroke-width=".6"/><circle cx="2.6" cy="4" r=".45" fill="#2a2a2a"/></svg><span class="t" style="left:39px;top:2px;height:40px;line-height:40px;font-size:16px;color:#fff;letter-spacing:-0.036px;">UpdateRineiStatusForm.php</span><svg width="13" height="13" viewBox="0 0 13 13" style="position:absolute;left:251px;top:13px"><path d="M2 2 L11 11 M11 2 L2 11" stroke="#fff" stroke-width="3.2" stroke-linecap="butt"/></svg></div></div>
<div id="ed"><div id="gut"></div>
<div class="ln" style="top:-3px">209</div>
<div class="cl" style="top:-3px"><span class="i g">····</span><span class="i">···</span><span class="i">¬</span></div>
<div class="ln" style="top:14px">210</div>
<div class="cl" style="top:14px"><span class="i g">····</span><span class="i">·</span>}<span class="i">¬</span></div>
<div class="ln" style="top:31px">211</div>
<div class="cl" style="top:31px"><span class="i">¬</span></div>
<div class="ln" style="top:48px">212</div>
<div class="cl" style="top:48px"><span class="i">····</span><span class="cm">//</span><span class="w cm">驳</span><span class="w cm">回</span><span class="i">¬</span></div>
<div class="ln" style="top:65px">213</div>
<div class="cl" style="top:65px"><span class="i">····</span><span class="k">private</span><span class="i">·</span><span class="k">function</span><span class="i">·</span>disagree(<span class="v">$input</span>)<span class="i">¬</span></div>
<div class="ln" style="top:82px">214</div>
<div class="fold" style="top:89px"></div>
<div class="cl" style="top:82px"><span class="i">····</span>{<span class="i">¬</span></div>
<div class="ln" style="top:99px">215</div>
<div class="cl" style="top:99px"><span class="i g">····</span><span class="i">····</span><span class="i">¬</span></div>
<div class="ln" style="top:116px">216</div>
<div class="cl" style="top:116px"><span class="i g">····</span><span class="i">····</span><span class="v">$id</span><span class="i">·</span><span class="k">=</span><span class="i">·</span><span class="v">$input</span>[<span class="s">'id'</span>];<span class="i">¬</span></div>
<div class="ln" style="top:133px">217</div>
<div class="cl" style="top:133px"><span class="i">¬</span></div>
<div class="ln" style="top:150px">218</div>
<div class="cl" style="top:150px"><span class="i g">····</span><span class="i">····</span><span class="v">$userpay</span><span class="i">·</span><span class="k">=</span><span class="i">·</span><span class="c">Model</span><span class="k">::</span>where(<span class="s">'id'</span>,<span class="v">$id</span>)<span class="k">-&gt;</span>where(<span class="s">'status'</span>,<span class="n">0</span>)<span class="k">-&gt;</span>first();<span class="i">¬</span></div>
<div class="ln" style="top:167px">219</div>
<div class="fold" style="top:174px"></div>
<div class="cl" style="top:167px"><span class="i g">····</span><span class="i">····</span><span class="k">if</span>(<span class="f">empty</span>(<span class="v">$userpay</span>)){<span class="i">¬</span></div>
<div class="ln" style="top:184px">220</div>
<div class="cl" style="top:184px"><span class="i g">····</span><span class="i g">····</span><span class="i">····</span><span class="k">throw</span><span class="i">·</span><span class="k">new</span><span class="i">·</span><span class="c">Exception</span>(<span class="s">"</span><span class="w s">没</span><span class="w s">有</span><span class="w s">此</span><span class="w s">条</span><span class="w s">记</span><span class="w s">录</span><span class="w s">或</span><span class="w s">不</span><span class="w s">满</span><span class="w s">足</span><span class="w s">条</span><span class="w s">件</span><span class="s">"</span>);<span class="i">¬</span></div>
<div class="ln" style="top:201px">221</div>
<div class="cl" style="top:201px"><span class="i g">····</span><span class="i">····</span>}<span class="i">¬</span></div>
<div class="ln" style="top:218px">222</div>
<div class="cl" style="top:218px"><span class="i g">····</span><span class="i">····</span><span class="v">$user</span><span class="i">·</span><span class="k">=</span><span class="i">·</span><span class="c">User</span><span class="k">::</span>where(<span class="s">'uid'</span>,<span class="v">$userpay</span><span class="k">-&gt;</span>uid)<span class="k">-&gt;</span>first();<span class="i">¬</span></div>
<div class="ln" style="top:235px">223</div>
<div class="fold" style="top:242px"></div>
<div class="cl" style="top:235px"><span class="i g">····</span><span class="i">····</span><span class="k">if</span>(<span class="f">empty</span>(<span class="v">$user</span>)){<span class="i">¬</span></div>
<div class="ln" style="top:252px">224</div>
<div class="cl" style="top:252px"><span class="i g">····</span><span class="i g">····</span><span class="i">····</span><span class="k">throw</span><span class="i">·</span><span class="k">new</span><span class="i">·</span><span class="c">Exception</span>(<span class="s">"</span><span class="w s">没</span><span class="w s">有</span><span class="w s">此</span><span class="w s">用</span><span class="w s">户</span><span class="s">"</span>);<span class="i">¬</span></div>
<div class="ln" style="top:269px">225</div>
<div class="cl" style="top:269px"><span class="i g">····</span><span class="i">····</span>}<span class="i">¬</span></div>
<div class="ln" style="top:286px">226</div>
<div class="cl" style="top:286px"><span class="i">¬</span></div>
<div class="ln" style="top:303px">227</div>
<div class="fold" style="top:310px"></div>
<div class="cl" style="top:303px"><span class="i g">····</span><span class="i">····</span><span class="k">if</span>(<span class="k">!</span><span class="v">$user</span><span class="k">-&gt;</span>money){<span class="i">¬</span></div>
<div class="ln" style="top:320px">228</div>
<div class="cl" style="top:320px"><span class="i g">····</span><span class="i g">····</span><span class="i">····</span><span class="cm">//</span><span class="i">·</span><span class="cm">throw</span><span class="i">·</span><span class="cm">new</span><span class="i">·</span><span class="cm">Exception("</span><span class="w cm">金</span><span class="w cm">额</span><span class="w cm">信</span><span class="w cm">息</span><span class="w cm">不</span><span class="w cm">存</span><span class="w cm">在</span><span class="cm">");</span><span class="i">¬</span></div>
<div class="ln" style="top:337px">229</div>
<div class="cl" style="top:337px"><span class="i g">····</span><span class="i">····</span>}<span class="i">¬</span></div>
<div class="ln" style="top:354px">230</div>
<div class="cl" style="top:354px"><span class="i">¬</span></div>
<div class="ln" style="top:371px">231</div>
<div class="cl" style="top:371px"><span class="i g">····</span><span class="i">····</span><span class="v">$money_log</span><span class="i">·</span><span class="k">=</span><span class="i">·</span><span class="k">new</span><span class="i">·</span><span class="c">PtrUserMoneyLog</span>();<span class="i">¬</span></div>
<div class="ln" style="top:388px">232</div>
<div class="cl" style="top:388px"><span class="i g">····</span><span class="i">····</span><span class="v">$money_log</span><span class="k">-&gt;</span>uid<span class="i">·</span><span class="k">=</span><span class="i">·</span><span class="v">$userpay</span><span class="k">-&gt;</span>uid;<span class="i">¬</span></div>
<div class="ln" style="top:405px">233</div>
<div class="cl" style="top:405px"><span class="i g">····</span><span class="i">····</span><span class="v">$money_log</span><span class="k">-&gt;</span>desc<span class="i">·</span><span class="k">=</span><span class="i">·</span><span class="s">"</span><span class="w s">반</span><span class="w s">품</span><span class="w s">을</span><span class="i">·</span><span class="w s">거</span><span class="w s">부</span><span class="w s">하</span><span class="w s">다</span><span class="w s">：</span><span class="s">+{</span><span class="v">$userpay-&gt;money</span><span class="s">}"</span>;<span class="i">¬</span></div>
<div class="ln" style="top:422px">234</div>
<div class="cl" style="top:422px"><span class="i g">····</span><span class="i">····</span><span class="v">$money_log</span><span class="k">-&gt;</span>money<span class="i">·</span><span class="k">=</span><span class="i">·</span><span class="v">$userpay</span><span class="k">-&gt;</span>money;<span class="i">¬</span></div>
<div class="ln" style="top:439px">235</div>
<div class="cl" style="top:439px"><span class="i g">····</span><span class="i">····</span><span class="v">$money_log</span><span class="k">-&gt;</span>before<span class="i">·</span><span class="k">=</span><span class="i">·</span><span class="v">$user</span><span class="k">-&gt;</span>money;<span class="i">¬</span></div>
<div class="ln" style="top:456px">236</div>
<div class="cl" style="top:456px"><span class="i g">····</span><span class="i">····</span><span class="v">$money_log</span><span class="k">-&gt;</span>after<span class="i">·</span><span class="k">=</span><span class="i">·</span><span class="v">$user</span><span class="k">-&gt;</span>money<span class="k">+</span><span class="v">$userpay</span><span class="k">-&gt;</span>money;<span class="i">¬</span></div>
<div class="ln" style="top:473px">237</div>
<div class="cl" style="top:473px"><span class="i g">····</span><span class="i">····</span><span class="v">$money_log</span><span class="k">-&gt;</span>type<span class="i">·</span><span class="k">=</span><span class="i">·</span><span class="n">3</span>;<span class="i">¬</span></div>
<div class="ln" style="top:490px">238</div>
<div class="cl" style="top:490px"><span class="i g">····</span><span class="i">····</span><span class="v">$money_log</span><span class="k">-&gt;</span>relation<span class="i">·</span><span class="k">=</span><span class="i">·</span><span class="v">$userpay</span><span class="k">-&gt;</span>id;<span class="i">¬</span></div>
<div class="ln" style="top:507px">239</div>
<div class="cl" style="top:507px"><span class="i g">····</span><span class="i">····</span><span class="v">$money_log</span><span class="k">-&gt;</span>created_at<span class="i">·</span><span class="k">=</span><span class="i">·</span><span class="f">date</span>(<span class="s">'Y-m-d</span><span class="i">·</span><span class="s">H:i:s'</span>);<span class="i">¬</span></div>
<div class="ln" style="top:524px">240</div>
<div class="cl" style="top:524px"><span class="i g">····</span><span class="i">····</span><span class="v">$money_log</span><span class="k">-&gt;</span>save();<span class="i">¬</span></div>
<div class="ln" style="top:541px">241</div>
<div class="cl" style="top:541px"><span class="i">¬</span></div>
<div class="ln" style="top:558px">242</div>
<div class="cl" style="top:558px"><span class="i g">····</span><span class="i">····</span><span class="v">$user</span><span class="k">-&gt;</span>money<span class="i">·</span><span class="k">+=</span><span class="i">·</span><span class="v">$userpay</span><span class="k">-&gt;</span>money;<span class="i">¬</span></div>
<div class="ln" style="top:575px">243</div>
<div class="cl" style="top:575px"><span class="i g">····</span><span class="i">····</span><span class="v">$user</span><span class="k">-&gt;</span>save();<span class="i">¬</span></div>
<div id="redbox"></div>
<div id="sbar"><div id="sthumb"></div></div><div id="edsh"></div>
</div>
<div id="stat"><span class="t" style="left:15px;top:0px;height:35px;line-height:35px;font-size:13px;">文件位置：</span><span class="t" style="left:80px;top:0px;height:35px;line-height:35px;font-size:14px;letter-spacing:0.229px;">/www/wwwroot/admin.dgbstock.top/app/Admin/Forms/UpdateRineiStatusForm.php</span><span class="t" style="left:740px;top:0px;height:35px;line-height:35px;font-size:13px;letter-spacing:0.635px;">行 1 ,列 0</span><span class="t" style="left:835px;top:0px;height:35px;line-height:35px;font-size:13px;letter-spacing:0.109px;">历史版本：1份</span><span class="t" style="left:952px;top:0px;height:35px;line-height:35px;font-size:13px;letter-spacing:0.191px;">空格：4</span><span class="t" style="left:1029px;top:0px;height:35px;line-height:35px;font-size:13px;letter-spacing:0.145px;">编码：UTF-8</span><span class="t" style="left:1137px;top:0px;height:35px;line-height:35px;font-size:13px;letter-spacing:-0.122px;">语言：PHP</span><i style="left:819px"></i><i style="left:936px"></i><i style="left:1013px"></i><i style="left:1121px"></i><i style="left:1217px"></i></div>
<div id="collapse"><svg width="8" height="11" viewBox="0 0 8 11" style="position:absolute;left:2.5px;top:17.5px"><path d="M6.6 1 L1.8 5.5 L6.6 10" fill="none" stroke="#fff" stroke-width="2.2"/></svg></div>
</div></div></div><span class="pt" style="left:622px;top:889.5px;height:20px;line-height:20px;font-size:12px;color:#444;letter-spacing:0.27px;">宝塔Linux面板 ©2014-2024 广东堡塔安全技术有限公司 (bt.cn)</span><span class="pt" style="left:976px;top:889.5px;height:20px;line-height:20px;font-size:12px;color:#20a53a;letter-spacing:0px;">论坛求助</span><span class="pt" style="left:1032px;top:889.5px;height:20px;line-height:20px;font-size:12px;color:#444;">|</span><span class="pt" style="left:1047px;top:889.5px;height:20px;line-height:20px;font-size:12px;color:#20a53a;letter-spacing:0px;">使用手册</span><span class="pt" style="left:1103px;top:889.5px;height:20px;line-height:20px;font-size:12px;color:#444;">|</span><span class="pt" style="left:1118px;top:889.5px;height:20px;line-height:20px;font-size:12px;color:#20a53a;letter-spacing:0px;">微信公众号</span><span class="pt" style="left:1186px;top:889.5px;height:20px;line-height:20px;font-size:12px;color:#444;">|</span><span class="pt" style="left:1201px;top:889.5px;height:20px;line-height:20px;font-size:12px;color:#20a53a;letter-spacing:0px;">正版查询</span><span class="pt" style="left:1260px;top:889.5px;height:20px;line-height:20px;font-size:12px;color:#444;">|</span><span class="pt" style="left:1271px;top:889.5px;height:20px;line-height:20px;font-size:12px;color:#20a53a;letter-spacing:0.251px;">用户交流QQ群：523693527</span><div id="float"></div><svg width="15" height="14" viewBox="0 0 15 14" style="position:absolute;left:1847px;top:715.5px"><path fill="#20a53a" d="M1.2 7.6 C-.2 3.4 3 .4 7.5 .4 C12 .4 15.2 3.4 13.8 7.6 C13.6 6 12.6 4.8 11.4 4.2 C9.6 5.4 6 5.6 3.4 4.4 C2.4 5 1.5 6.2 1.2 7.6 Z"/><path fill="none" stroke="#20a53a" stroke-width="1.1" d="M2.6 7.6 C2.6 10.6 4.8 12.6 7.5 12.6 C10.2 12.6 12.4 10.6 12.4 7.6"/><path fill="#20a53a" d="M.6 6.6 H2.4 V10 H.6 Z M12.6 6.6 H14.4 V10 H12.6 Z"/><circle cx="5.6" cy="8" r=".7" fill="#20a53a"/><circle cx="9.4" cy="8" r=".7" fill="#20a53a"/><path d="M13.4 10 C13.4 12 11.4 13.2 9 13.2" fill="none" stroke="#20a53a" stroke-width=".9"/></svg><div class="fl" style="left:1848px;top:737px">客<br>服</div><svg width="14" height="14" viewBox="0 0 14 14" style="position:absolute;left:1848px;top:790.5px"><path d="M6.4 1.8 H1.2 V12.8 H12.2 V7.6" fill="none" stroke="#20a53a" stroke-width="1.2"/><path d="M5 9 L5.6 6.6 L11.4 .8 L13.2 2.6 L7.4 8.4 Z" fill="none" stroke="#20a53a" stroke-width="1.1"/></svg><div class="fl" style="left:1848px;top:813px">评<br>价</div></body></html>
